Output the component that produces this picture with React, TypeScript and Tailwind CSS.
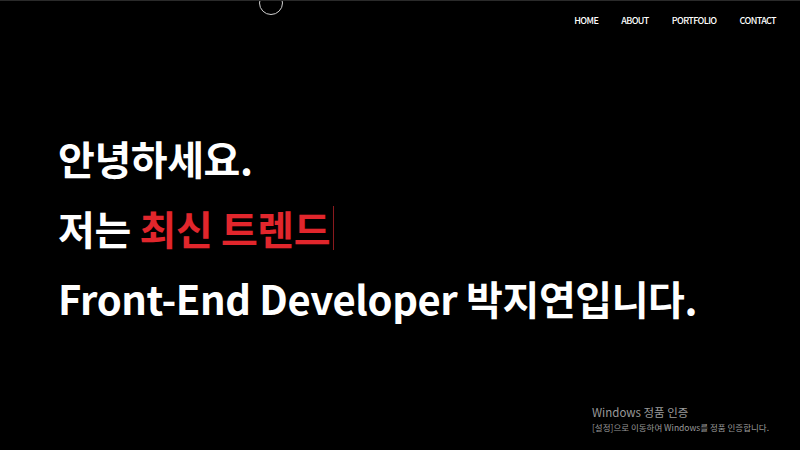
import React from 'react'

const navItems = ['HOME', 'ABOUT', 'PORTFOLIO', 'CONTACT']

const Header = () => {
  return (
    <header className="flex h-[30px] items-start justify-end pr-[24px] pt-[14px]">
      <nav className="flex gap-[23px]">
        {navItems.map((item) => (
          <a key={item} className="text-[9px] font-medium leading-[12px] tracking-[-0.6px] text-white">
            {item}
          </a>
        ))}
      </nav>
    </header>
  )
}

const Hero = () => {
  return (
    <section className="flex flex-col pl-[58px] pt-[92px] text-[40px] font-bold leading-[70px] tracking-[-0.4px] text-white">
      <h1>안녕하세요.</h1>
      <h1 className="flex items-center">
        저는&nbsp;<span className="text-[#e1262c]">최신 트렌드</span>
        <span className="ml-[3px] h-[44px] w-[1px] bg-[#8a1a1e]" />
      </h1>
      <h1>Front-End Developer 박지연입니다.</h1>
    </section>
  )
}

export default function App() {
  return (
    <div
      className="relative h-[450px] w-[800px] overflow-hidden border-t border-[#2a2a2a] bg-black"
      style={{ fontFamily: '"Noto Sans CJK KR", "Noto Sans", sans-serif' }}
    >
      {/* scroll indicator */}
      <span className="absolute left-[259px] top-[-10px] h-[24px] w-[24px] rounded-full border border-[#d0d0d0]" />
      <Header />
      <Hero />
      <div className="absolute left-[592px] top-[403px] text-[#9a9a9a]">
        <p className="text-[11.5px] leading-[16px]">Windows 정품 인증</p>
        <p className="text-[8.5px] leading-[14px]">[설정]으로 이동하여 Windows를 정품 인증합니다.</p>
      </div>
    </div>
  )
}
